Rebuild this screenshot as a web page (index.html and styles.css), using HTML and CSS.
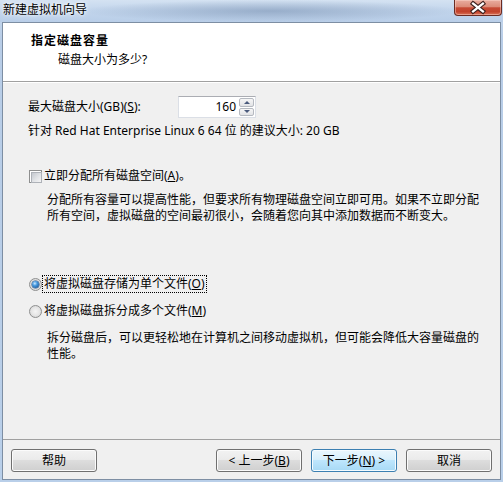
FILE: index.html
```html
<!DOCTYPE html>
<html lang="zh-CN">
<head>
<meta charset="utf-8">
<title>新建虚拟机向导</title>
<link rel="stylesheet" href="styles.css">
</head>
<body>
<div class="window">
  <div class="titlebar">
    <span class="title">新建虚拟机向导</span>
    <div class="close">
      <svg width="47" height="16" viewBox="0 0 47 16">
        <path d="M18.5 3.5 L28.5 11.5 M28.5 3.5 L18.5 11.5" stroke="#3b1f1c" stroke-width="4.6" stroke-linecap="square" fill="none"/>
        <path d="M18.5 3.5 L28.5 11.5 M28.5 3.5 L18.5 11.5" stroke="#ffffff" stroke-width="2.4" stroke-linecap="square" fill="none"/>
      </svg>
    </div>
  </div>
  <div class="client">
    <div class="header">
      <div class="h-title">指定磁盘容量</div>
      <div class="h-sub">磁盘大小为多少?</div>
    </div>
    <div class="content">
      <div class="size-row">
        <span class="size-label">最大磁盘大小(GB)(<u>S</u>):</span>
        <div class="spin">
          <span class="spin-val">160</span>
          <div class="spin-btns">
            <span class="sb"><i class="arrow up"></i></span>
            <span class="sb"><i class="arrow down"></i></span>
          </div>
        </div>
      </div>
      <div class="rec">针对 Red Hat Enterprise Linux 6 64 位 的建议大小: 20 GB</div>
      <div class="check-row">
        <span class="checkbox"></span>
        <span>立即分配所有磁盘空间(<u>A</u>)。</span>
      </div>
      <p class="desc">分配所有容量可以提高性能，但要求所有物理磁盘空间立即可用。如果不立即分配<br>所有空间，虚拟磁盘的空间最初很小，会随着您向其中添加数据而不断变大。</p>
      <div class="radio-row first">
        <span class="radio on"></span>
        <span class="focus">将虚拟磁盘存储为单个文件(<u>O</u>)</span>
      </div>
      <div class="radio-row second">
        <span class="radio"></span>
        <span class="plain">将虚拟磁盘拆分成多个文件(<u>M</u>)</span>
      </div>
      <p class="desc desc2">拆分磁盘后，可以更轻松地在计算机之间移动虚拟机，但可能会降低大容量磁盘的<br>性能。</p>
    </div>
    <div class="footer">
      <button class="btn">帮助</button>
      <div class="nav">
        <button class="btn">&lt; 上一步(<u>B</u>)</button>
        <button class="btn default">下一步(<u>N</u>) &gt;</button>
        <button class="btn">取消</button>
      </div>
    </div>
  </div>
</div>
</body>
</html>
```
FILE: styles.css
```css
* { box-sizing: border-box; }

html, body {
  margin: 0;
  padding: 0;
}

body {
  width: 503px;
  height: 482px;
  overflow: hidden;
  font-family: "Noto Sans", "Noto Sans CJK SC", sans-serif;
  font-size: 12px;
  line-height: 16px;
  color: #000;
}

u {
  text-decoration: underline;
  text-underline-offset: 1px;
}

.window {
  width: 503px;
  height: 482px;
  display: flex;
  flex-direction: column;
  padding: 0 2px 2px 2px;
  background: linear-gradient(to bottom, #c9daee 0px, #b8cde7 40px, #b9cfe9 100%);
}

/* ---------- title bar ---------- */
.titlebar {
  height: 22px;
  flex: none;
  display: flex;
  align-items: flex-start;
  justify-content: space-between;
  margin: 0 -2px;
  padding-left: 3px;
  padding-right: 1px;
  background:
    radial-gradient(ellipse 190px 11px at 270px 11px, rgba(100, 125, 160, 0.45), rgba(100, 125, 160, 0) 100%),
    linear-gradient(to bottom, #d4e2f2 0%, #c2d5ec 50%, #b9cee8 100%);
}

.title {
  line-height: 20px;
  color: #000;
  text-shadow: 0 0 6px #ffffff, 0 0 3px #ffffff;
}

.close {
  width: 48px;
  height: 16px;
  border: 1px solid #6a2b22;
  border-top: none;
  border-radius: 0 0 4px 4px;
  background: linear-gradient(to bottom, #e9ad9f 0%, #dc8b78 45%, #c64a34 52%, #c3432c 78%, #d9745a 100%);
  box-shadow: inset 0 0 0 1px rgba(255, 220, 210, 0.45);
  display: flex;
}

.close svg { display: block; }

/* ---------- client ---------- */
.client {
  flex: 1;
  display: flex;
  flex-direction: column;
  border: 1px solid #7d8ea3;
  background: #f0f0f0;
}

.header {
  height: 59px;
  flex: none;
  background: #fff;
  border-bottom: 1px solid #a0a0a0;
  padding: 10px 0 0 28px;
}

.h-title {
  font-weight: 700;
  letter-spacing: 1px;
  line-height: 16px;
}

.h-sub {
  margin: 3px 0 0 27px;
  line-height: 16px;
}

.content {
  flex: 1;
  border-top: 1px solid #ffffff;
  padding-left: 25px;
  display: flex;
  flex-direction: column;
}

.size-row {
  margin-top: 13px;
  height: 22px;
  display: flex;
  align-items: center;
}

.size-label {
  width: 150px;
  flex: none;
}

.spin {
  width: 78px;
  height: 22px;
  display: flex;
  align-items: stretch;
  background: #fff;
  border: 1px solid #dbdfe6;
  border-top-color: #abadb3;
  padding: 1px;
}

.spin-val {
  flex: 1;
  text-align: right;
  padding-right: 3px;
  line-height: 18px;
}

.spin-btns {
  width: 15px;
  display: flex;
  flex-direction: column;
  gap: 1px;
}

.sb {
  flex: 1;
  display: flex;
  align-items: center;
  justify-content: center;
  border: 1px solid #b5b9c0;
  border-radius: 2px;
  background: linear-gradient(to bottom, #f6f6f6, #e2e3e6);
}

.arrow {
  width: 0;
  height: 0;
  border-left: 3px solid transparent;
  border-right: 3px solid transparent;
}

.arrow.up { border-bottom: 3px solid #4a5a7c; }
.arrow.down { border-top: 3px solid #4a5a7c; }

.rec {
  margin-top: 5px;
  line-height: 16px;
}

.check-row {
  margin-top: 29px;
  height: 16px;
  display: flex;
  align-items: center;
}

.checkbox {
  width: 13px;
  height: 13px;
  flex: none;
  margin: 0 2px 0 1px;
  border: 1px solid #8e8f8f;
  background: #fff;
  padding: 1px;
}

.checkbox::before {
  content: "";
  display: block;
  width: 9px;
  height: 9px;
  border: 1px solid #aeb2b8;
  background: linear-gradient(135deg, #c4c8ce 0%, #e2e4e7 55%, #f4f4f5 100%);
}

.desc {
  margin: 8px 0 0 19px;
  line-height: 16px;
}

.radio-row {
  height: 18px;
  display: flex;
  align-items: center;
}

.radio-row.first { margin-top: 51px; }
.radio-row.second { margin-top: 9px; }

.radio {
  width: 13px;
  height: 13px;
  flex: none;
  margin: 0 1px 0 1px;
  border-radius: 50%;
  border: 1px solid #8e8f8f;
  background: radial-gradient(circle at 50% 50%, #f4f4f4 0%, #e6e6e6 50%, #cdcdcd 100%);
  display: flex;
  align-items: center;
  justify-content: center;
}

.radio.on::before {
  content: "";
  width: 7px;
  height: 7px;
  border-radius: 50%;
  background: radial-gradient(circle at 40% 35%, #cfeaff 0%, #4a9be0 35%, #1d5b9c 80%, #173f72 100%);
  box-shadow: 0 0 0 0.5px #2a4e7e;
}

.focus {
  outline: 1px dotted #000;
  outline-offset: 0;
  padding: 0 1px;
  line-height: 16px;
}

.plain {
  padding: 0 1px;
}

.desc2 { margin-top: 10px; }

/* ---------- footer ---------- */
.footer {
  flex: none;
  height: 40px;
  border-top: 1px solid #a0a0a0;
  padding: 9px 8px 0 8px;
  display: flex;
  justify-content: space-between;
  align-items: flex-start;
}

.nav {
  display: flex;
  gap: 9px;
}

.btn {
  width: 86px;
  height: 23px;
  padding: 0;
  margin: 0;
  font: inherit;
  line-height: 19px;
  color: #000;
  border: 1px solid #707070;
  border-radius: 3px;
  background: linear-gradient(to bottom, #f2f2f2 0%, #ebebeb 45%, #dddddd 50%, #cfcfcf 100%);
  box-shadow: inset 0 0 0 1px #fbfbfb;
}

.btn.default {
  border-color: #3c7fb1;
  background: linear-gradient(to bottom, #eaf6fd 0%, #d9f0fc 45%, #bee6fd 50%, #a7d9f5 100%);
  box-shadow: inset 0 0 0 1px #f4fbff;
}
```
